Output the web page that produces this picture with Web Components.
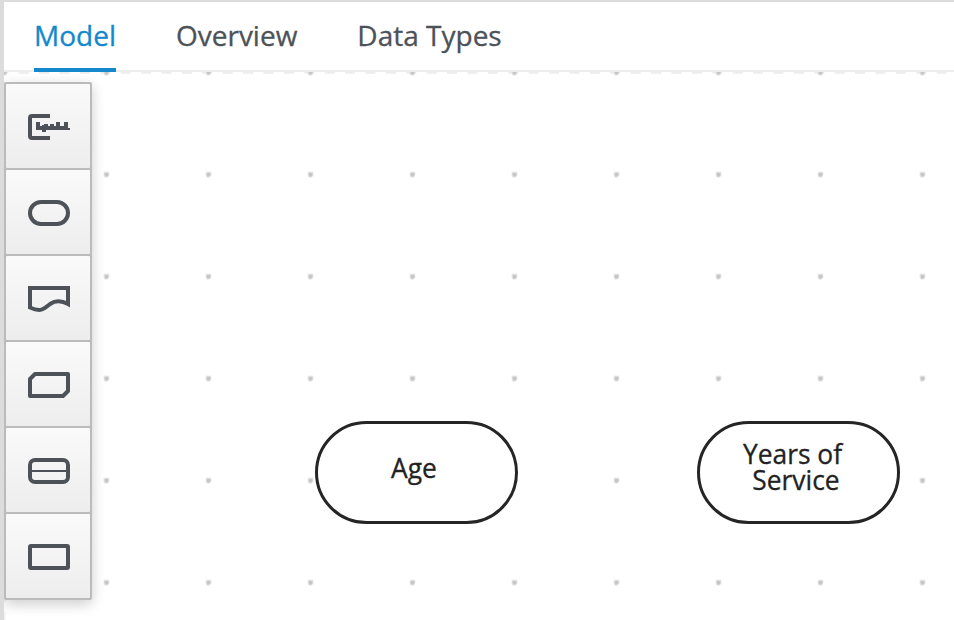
<!DOCTYPE html>
<html lang="en"><head><meta charset="utf-8"><title>Model</title>
<style>html,body{margin:0;height:100%;overflow:hidden;background:#fff}</style></head>
<body>
<model-editor>
<tab-bar slot="tabs"><tab-item active>Model</tab-item><tab-item>Overview</tab-item><tab-item>Data Types</tab-item></tab-bar>
<tool-palette slot="palette">
<tool-button icon="annotation"></tool-button><tool-button icon="input"></tool-button><tool-button icon="source"></tool-button><tool-button icon="knowledge"></tool-button><tool-button icon="service"></tool-button><tool-button icon="decision"></tool-button>
</tool-palette>
<input-node style="left:311px;top:349px;padding:31px 5px 0 0"><node-line>Age</node-line></input-node>
<input-node style="left:693px;top:349px;padding-top:17px"><node-line style="margin-right:12px">Years of</node-line><node-line style="margin-right:5px">Service</node-line></input-node>
</model-editor>
<script>
const define=(name,markup)=>customElements.define(name,class extends HTMLElement{
  constructor(){super();this.attachShadow({mode:'open'}).innerHTML=typeof markup==='function'?markup(this):markup;}
});
define('model-editor',`<style>
:host{display:flex;flex-direction:column;box-sizing:border-box;width:954px;height:620px;border-top:2px solid #dcdcdc;border-left:4px solid #dcdcdc;background:#fff;font-family:"Open Sans","Noto Sans",sans-serif;color:#4d5258}
main{position:relative;flex:1;overflow:hidden;display:flex;align-items:flex-start;padding-top:10px}
.grid{position:absolute;inset:0;width:950px;height:548px}
</style><slot name="tabs"></slot><main>
<svg class="grid"><defs><pattern id="dots" x="51" y="51.5" width="102" height="102" patternUnits="userSpaceOnUse"><path d="M48.7 48.5h5.6v3.5l-2 2h-2.5l-1.1-2z" fill="#dedede"/><circle cx="51.6" cy="51" r="1.9" fill="#c5c5c5"/></pattern></defs>
<path d="M0 .7H950" stroke="#ededed" stroke-width="2" stroke-dasharray="10 10.4" stroke-dashoffset="5.7"/>
<path d="M.7 0V548" stroke="#f2f2f2" stroke-width="2" stroke-dasharray="10 10.4" stroke-dashoffset="10.8"/>
<rect width="950" height="548" fill="url(#dots)"/></svg>
<slot name="palette"></slot><slot></slot></main>`);
define('tab-bar',`<style>:host{display:flex;gap:60px;box-sizing:border-box;height:70px;padding-left:30px;border-bottom:2px solid #ededed;flex:none}</style><slot></slot>`);
define('tab-item',`<style>:host{display:block;box-sizing:border-box;height:70px;font-size:28px;line-height:66px;white-space:nowrap;-webkit-text-stroke:.3px currentColor}
:host([active]){color:#1488cc;border-bottom:4px solid #1488cc}</style><slot></slot>`);
define('tool-palette',`<style>:host{position:relative;z-index:1;display:flex;flex-direction:column;box-sizing:border-box;width:88px;border:2px solid #bbb;border-radius:2px;box-shadow:0 4px 14px rgba(0,0,0,.2);background:#bbb;gap:2px}</style><slot></slot>`);
const icons={
annotation:'<path d="M22 2H4Q2 2 2 4V22Q2 24 4 24H22"/><path fill="currentColor" stroke="none" d="M8 8H12V12H14V11H16V10H20V12H22V10H26V12H28V8H32V12H36V8H40V14H42V16H18V18H14V16H8Z"/>',
input:'<rect x="2" y="2" width="38" height="22" rx="11"/>',
source:'<path d="M2 2H40V18C33 14 27 14.5 22 18C17 22 14 27 2 21.5Z"/>',
knowledge:'<path d="M7 2H40V19L35 24H2V7Z" stroke-linejoin="round"/>',
service:'<rect x="2" y="2" width="38" height="22" rx="5"/><path d="M3 13H39" stroke-width="2"/>',
decision:'<rect x="2" y="2" width="38" height="22" rx="1" stroke-linejoin="round"/>'};
define('tool-button',host=>`<style>
:host{display:flex;box-sizing:border-box;width:84px;height:84px;padding:30px 0 0 22px;border-radius:1px;background:linear-gradient(#fafafa,#ededed)}
svg{width:42px;height:26px;overflow:visible;fill:none;stroke:currentColor;stroke-width:4}
</style><svg viewBox="0 0 42 26">${icons[host.getAttribute('icon')]}</svg>`);
define('input-node',`<style>
:host{position:absolute;display:flex;flex-direction:column;align-items:center;box-sizing:border-box;width:203px;height:103px;border:3px solid #252525;border-radius:51.5px;background:#fff;color:#222}
</style><slot></slot>`);
define('node-line',`<style>:host{display:block;font-size:26.4px;line-height:26px;white-space:nowrap;-webkit-text-stroke:.3px currentColor}</style><slot></slot>`);
</script>
</body></html>
